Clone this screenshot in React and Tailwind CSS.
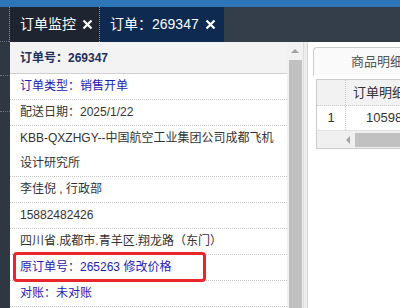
import React from "react";

const font = {
	fontFamily: '"Liberation Sans", "Noto Sans CJK SC", sans-serif',
};

const CloseIcon = () => (
	<svg width="11" height="11" viewBox="0 0 11 11" className="shrink-0">
		<path d="M1.5 1.5 L9.5 9.5 M9.5 1.5 L1.5 9.5" stroke="#fff" strokeWidth="2.2" />
	</svg>
);

const rows = [
	{ text: "订单类型：销售开单", blue: true },
	{ text: "配送日期：2025/1/22" },
	{ text: "KBB-QXZHGY--中国航空工业集团公司成都飞机设计研究所" },
	{ text: "李佳倪 , 行政部" },
	{ text: "15882482426" },
	{ text: "四川省.成都市.青羊区.翔龙路（东门）" },
	{ text: "原订单号：265263 修改价格", blue: true },
	{ text: "对账：未对账", blue: true },
];

export default function App() {
	return (
		<div
			className="w-[400px] h-[308px] overflow-hidden flex flex-col bg-white relative"
			style={font}
		>
			{/* top blue strip */}
			<div className="h-[7px] bg-[#2e76b8] shrink-0" />

			{/* tabs */}
			<div className="h-[35px] shrink-0 flex bg-[#343d4a] text-white text-[14px]">
				<div className="w-[10px] bg-[#2a313c] border-r border-dotted border-[#8a93a0] relative">
					<div className="absolute left-0 right-0 bottom-0 border-b border-dotted border-[#6a7380]" />
				</div>
				<div className="w-[90px] bg-[#1e2530] border-r border-dotted border-[#8a93a0] flex items-center pl-[10px] gap-[6px]">
					<span>订单监控</span>
					<CloseIcon />
				</div>
				<div className="w-[124px] bg-[#0e2a50] flex items-center pl-[10px] gap-[6px]">
					<span>订单：269347</span>
					<CloseIcon />
				</div>
			</div>

			{/* body */}
			<div className="flex-1 flex min-h-0">
				<div className="w-[10px] shrink-0 bg-[#2f3742] flex flex-col">
					<div className="h-[34px] border-b border-dotted border-[#6a7380]" />
					<div className="h-[36px] border-b border-dotted border-[#6a7380]" />
				</div>

				{/* left detail panel */}
				<div className="w-[277px] shrink-0 flex flex-col text-[12px] text-[#333]">
					<div className="h-[32px] shrink-0 bg-[#f3f3f3] border-b border-[#cfcfcf] flex items-center pl-[10px] font-bold text-[#1d2f5a]">
						订单号：269347
					</div>
					{rows.map((r, i) => (
						<div
							key={i}
							className={`pl-[10px] pr-[10px] leading-[25px] border-b border-dotted border-[#c8c8c8] ${
								r.blue ? "text-[#1f22b0]" : ""
							}`}
						>
							{r.text}
						</div>
					))}
				</div>

				{/* scrollbar */}
				<div className="w-[16px] shrink-0 bg-[#f1f1f1] flex flex-col items-center">
					<div className="h-[18px] flex items-center justify-center">
						<div className="w-0 h-0 border-l-[4px] border-r-[4px] border-b-[4px] border-l-transparent border-r-transparent border-b-[#a3a3a3]" />
					</div>
					<div className="w-[13px] flex-1 bg-[#c1c1c1]" />
				</div>

				{/* splitter */}
				<div className="w-[5px] shrink-0 bg-[#ededed] border-l border-[#dcdcdc] border-r border-r-[#d8d8d8]" />

				{/* right panel */}
				<div className="flex-1 min-w-0 bg-white pl-[5px] pt-[3px] flex flex-col">
					<div className="h-[31px] flex items-end border-b border-[#cccccc]">
						<div className="h-[29px] w-[120px] shrink-0 border border-b-0 border-[#cccccc] rounded-tl-[4px] bg-[#fafafa] flex items-center pl-[37px] text-[13px] text-[#555] -mb-px">
							商品明细
						</div>
					</div>
					<div className="mt-[3px] ml-[3px] border border-[#cccccc] text-[13px] text-[#333] w-[120px]">
						<div className="h-[26px] flex bg-[#f2f2f2] border-b border-dotted border-[#cfcfcf]">
							<div className="w-[29px] shrink-0 border-r border-dotted border-[#c8c8c8]" />
							<div className="pl-[7px] flex items-center whitespace-nowrap">订单明细</div>
						</div>
						<div className="h-[24px] flex">
							<div className="w-[29px] shrink-0 flex items-center justify-center border-r border-dotted border-[#c8c8c8]">
								1
							</div>
							<div className="pl-[20px] flex items-center whitespace-nowrap">10598</div>
						</div>
						<div className="h-[18px] bg-[#f0f0f0] flex items-center border-t border-[#e2e2e2]">
							<div className="w-[38px] shrink-0 flex justify-end pr-[5px]">
								<div className="w-0 h-0 border-t-[4px] border-b-[4px] border-r-[4px] border-t-transparent border-b-transparent border-r-[#a3a3a3]" />
							</div>
							<div className="h-[14px] flex-1 bg-[#c1c1c1]" />
						</div>
					</div>
				</div>
			</div>

			{/* annotation box */}
			<div className="absolute left-[13px] top-[252px] w-[193px] h-[30px] border-[3px] border-[#e8262b] rounded-[4px]" />
		</div>
	);
}
